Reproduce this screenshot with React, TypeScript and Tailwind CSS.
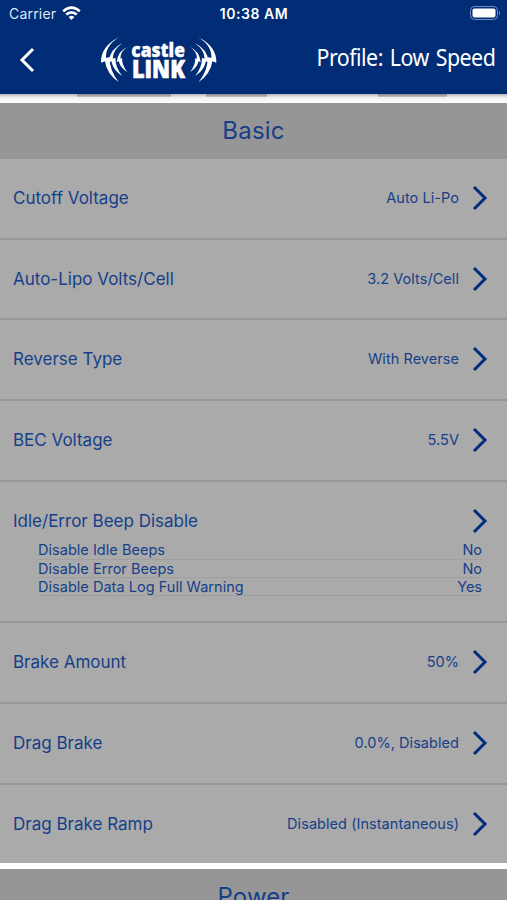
import React from 'react';

interface Setting {
  label: string;
  value?: string;
  height: string;
  details?: { label: string; value: string }[];
}

const settings: Setting[] = [
  { label: 'Cutoff Voltage', value: 'Auto Li-Po', height: 'h-[80.5px]' },
  { label: 'Auto-Lipo Volts/Cell', value: '3.2 Volts/Cell', height: 'h-[80.5px]' },
  { label: 'Reverse Type', value: 'With Reverse', height: 'h-[81px]' },
  { label: 'BEC Voltage', value: '5.5V', height: 'h-[80.5px]' },
  {
    label: 'Idle/Error Beep Disable',
    height: 'h-[141.5px]',
    details: [
      { label: 'Disable Idle Beeps', value: 'No' },
      { label: 'Disable Error Beeps', value: 'No' },
      { label: 'Disable Data Log Full Warning', value: 'Yes' },
    ],
  },
  { label: 'Brake Amount', value: '50%', height: 'h-[81px]' },
  { label: 'Drag Brake', value: '0.0%, Disabled', height: 'h-[80.5px]' },
  { label: 'Drag Brake Ramp', value: 'Disabled (Instantaneous)', height: 'h-[78.5px]' },
];

const Waves = () => (
  <g fill="white">
    <path d="M88 22 Q46 46 48 84 L59 81 Q58 122 86 156 Q50 132 45 94 L33 98 Q32 48 88 22Z" />
    <path d="M98 39 Q68 60 68 86 L76 83 Q76 113 97 138 Q70 122 64 94 L56 97 Q59 57 98 39Z" />
    <path d="M112 51 Q91 64 91 86 L96 84 Q96 107 112 126 Q92 115 86 94 L80 96 Q84 63 112 51Z" />
  </g>
);

const Logo = () => (
  <svg width="135" height="60" viewBox="0 0 405 180">
    <Waves />
    <g transform="translate(412 0) scale(-1 1)">
      <Waves />
    </g>
    <g fill="white" stroke="white" fontFamily="Open Sans, sans-serif" fontWeight="800">
      <text x="124" y="81" fontSize="60" strokeWidth="1" textLength="161" lengthAdjust="spacingAndGlyphs">castle</text>
      <text x="126" y="144" fontSize="75" strokeWidth="2" textLength="159" lengthAdjust="spacingAndGlyphs">LINK</text>
    </g>
  </svg>
);

const Chevron = () => (
  <svg width="16" height="26" viewBox="0 0 16 26" fill="none" stroke="#002d7c" strokeWidth="3">
    <path d="M2 2 L13 13 L2 24" />
  </svg>
);

const StatusBar = () => (
  <div className="flex h-[27px] items-center pl-[9px] pr-[6px] text-white">
    <div className="flex flex-1 items-center gap-[6px]">
      <span className="text-[14px] text-[#dce6f7] tracking-[0.2px]">Carrier</span>
      <svg className="-mt-px" width="19" height="15" viewBox="0 0 19 15" fill="none" stroke="white" strokeWidth="2.6">
        <path d="M1.2 5.4 Q9.5 -2 17.8 5.4" />
        <path d="M4.2 8.6 Q9.5 4 14.8 8.6" />
        <path d="M6.6 11 Q9.5 8.6 12.4 11 L9.5 14Z" fill="white" stroke="none" />
      </svg>
    </div>
    <span className="-ml-[2px] text-[14px] font-semibold tracking-[0.55px]">10:38 AM</span>
    <div className="flex flex-1 justify-end">
      <svg className="-mt-px" width="31" height="14" viewBox="0 0 31 14">
        <rect x="0.5" y="0.5" width="27" height="13" rx="4" fill="none" stroke="#6f8cc0" />
        <rect x="2.5" y="2.5" width="23" height="9" rx="2" fill="white" />
        <path d="M29 4.5 Q31 7 29 9.5Z" fill="#6f8cc0" />
      </svg>
    </div>
  </div>
);

const App: React.FC = () => {
  return (
    <div className="h-[900px] w-full overflow-hidden bg-white font-['Inter',sans-serif] text-[#163f89]">
      <header className="h-[94px] bg-[#002d76]">
        <StatusBar />
        <div className="flex h-[65px] items-center justify-between pl-[19px] pr-3">
          <div className="flex items-center">
            <svg width="16" height="26" viewBox="0 0 16 26" fill="none" stroke="white" strokeWidth="3">
              <path d="M14 2 L3 13 L14 24" />
            </svg>
            <div className="ml-[55px]">
              <Logo />
            </div>
          </div>
          <h1 className="mt-[-4px] origin-right scale-x-[0.93] font-['Noto_Sans',sans-serif] text-[23px] tracking-[-0.55px] [word-spacing:2px] text-white whitespace-nowrap">
            Profile: Low Speed
          </h1>
        </div>
      </header>
      <div className="flex h-[9px] flex-col bg-linear-to-b from-[#b8b8b8] via-[#f0f0f0] via-40% to-white">
        <div className="flex h-[3px]">
          <div className="ml-[77px] h-full w-[94px] bg-linear-to-b from-[#858585] to-[#c4c4c4]" />
          <div className="ml-[35px] h-full w-[61px] bg-linear-to-b from-[#858585] to-[#c4c4c4]" />
          <div className="ml-[111px] h-full w-[69px] bg-linear-to-b from-[#858585] to-[#c4c4c4]" />
        </div>
      </div>

      <h2 className="flex h-14 items-center justify-center bg-[#969696] text-[24px] tracking-[0.2px]">Basic</h2>

      <main className="bg-[#aaa]">
        {settings.map((s, i) => (
          <section
            key={s.label}
            className={`${s.height} ${i < settings.length - 1 ? 'border-b-[2.5px] border-[#979797]' : ''}`}
          >
            <div className="flex h-[78px] items-center pl-[13px] pr-[19px]">
              <span className="flex-1 pt-[2px] text-[17px]">{s.label}</span>
              <span className="mr-[13px] text-[14.5px] tracking-[0.05px]">{s.value}</span>
              <Chevron />
            </div>
            {s.details && (
              <div className="-mt-[18px] ml-[38px] mr-[25px] text-[14.5px]">
                {s.details.map((d) => (
                  <div key={d.label} className="flex h-[18.3px] items-center justify-between border-b border-[#9f9f9f]">
                    <span className="tracking-[0.03px]">{d.label}</span>
                    <span>{d.value}</span>
                  </div>
                ))}
              </div>
            )}
          </section>
        ))}
      </main>

      <div className="h-[6px] bg-white" />
      <h2 className="flex h-14 items-center justify-center bg-[#969696] text-[24px] tracking-[0.1px]">Power</h2>
    </div>
  );
};

export default App;
